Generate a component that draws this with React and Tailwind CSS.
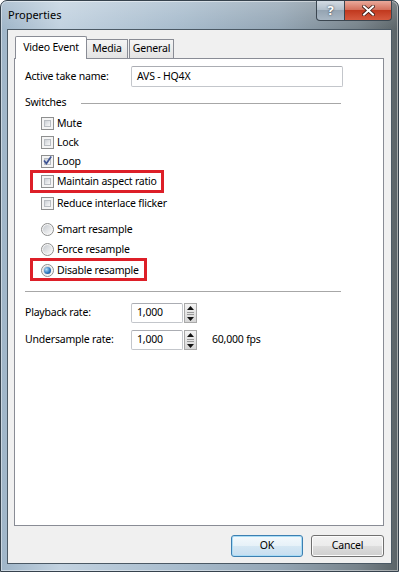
import React from "react";

const Check = ({ checked }) => (
    <span className="flex h-[13px] w-[13px] shrink-0 border border-[#8e8f8f] bg-[#f4f4f4] p-[2px]">
        <span className="relative flex-1 border border-[#b9bdc2] bg-gradient-to-br from-[#cdd1d6] to-[#f8f8f8]">
            {checked && (
                <svg className="absolute left-[-3px] top-[-4px]" width="11" height="11" viewBox="0 0 11 11">
                    <path d="M2 5.5 L4.4 8.6 L9.2 1.6" fill="none" stroke="#3e5494" strokeWidth="1.7" />
                </svg>
            )}
        </span>
    </span>
);

const Radio = ({ checked }) => (
    <span className="flex h-[13px] w-[13px] shrink-0 items-center justify-center rounded-full border border-[#8e8f8f] bg-[#f6f6f6]">
        <span className="flex h-[9px] w-[9px] items-center justify-center rounded-full bg-gradient-to-br from-[#c6cacf] to-[#fafafa]">
            {checked && (
                <span className="h-[7px] w-[7px] rounded-full bg-[radial-gradient(circle_at_35%_35%,#b4e0fb,#2f78bd_55%,#143f7a)]" />
            )}
        </span>
    </span>
);

const Spin = () => (
    <div className="ml-[1px] flex h-[20px] w-[13px] flex-col border border-[#a9a9a9] bg-gradient-to-b from-[#f3f3f3] to-[#d6d6d6]">
        <div className="flex h-[7px] items-center justify-center">
            <svg width="7" height="4" viewBox="0 0 7 4"><path d="M0 4 L3.5 0 L7 4Z" fill="#111" /></svg>
        </div>
        <div className="flex flex-1 flex-col justify-center gap-[1px] px-[2px]">
            <span className="h-[1px] bg-[#9a9a9a]" />
            <span className="h-[1px] bg-[#9a9a9a]" />
        </div>
        <div className="flex h-[7px] items-center justify-center">
            <svg width="7" height="4" viewBox="0 0 7 4"><path d="M0 0 L3.5 4 L7 0Z" fill="#111" /></svg>
        </div>
    </div>
);

const Row = ({ children, mark, markTop, markW, mt }) => (
    <div className={`relative flex h-[19px] items-center gap-[3px] ${mt}`}>
        {mark && (
            <span
                className="pointer-events-none absolute left-[-11px] h-[23px] border-[3px] border-[#dd1f28]"
                style={{ top: markTop, width: markW }}
            />
        )}
        {children}
    </div>
);

export default function App() {
    return (
        <div className="h-[572px] w-[399px] overflow-hidden bg-white font-['Noto_Sans',sans-serif] text-[10.5px] tracking-[-0.2px] text-black">
            <div className="flex h-[572px] w-[399px] flex-col overflow-hidden rounded-t-[7px] border border-[#36424d] bg-[linear-gradient(90deg,#9fb5c8,#c2d2e0_15%,#a8bccd_45%,#94a6b5_70%,#77838b_90%,#5b6468)] shadow-[inset_0_0_0_1px_rgba(255,255,255,0.45)]">
                {/* title bar */}
                <div className="flex h-[28px] shrink-0 bg-gradient-to-b from-white/20 to-transparent pl-[7px]">
                    <span className="mt-[6px] text-[11px] leading-[16px] tracking-normal">Properties</span>
                    <div className="ml-auto mr-[6px] flex h-[20px]">
                        <div className="flex w-[29px] items-center justify-center rounded-bl-[4px] border border-t-0 border-[#3b4650] bg-[linear-gradient(#d3dbe3,#b3c0cc_45%,#95a4b2_50%,#a9b7c4)] text-[13px] font-bold text-white [text-shadow:0_0_2px_#1d2834]">
                            ?
                        </div>
                        <div className="flex w-[47px] items-center justify-center rounded-br-[4px] border border-l-0 border-t-0 border-[#3b4650] bg-[linear-gradient(#e9a99b,#d4725e_45%,#c1391f_50%,#d65a3f)]">
                            <svg width="13" height="11" viewBox="0 0 13 11">
                                <path d="M2 1.5 L11 9.5 M11 1.5 L2 9.5" stroke="#3a1a14" strokeWidth="3.6" strokeLinecap="square" />
                                <path d="M2 1.5 L11 9.5 M11 1.5 L2 9.5" stroke="#ffffff" strokeWidth="2" strokeLinecap="square" />
                            </svg>
                        </div>
                    </div>
                </div>

                {/* client area */}
                <div className="mx-[6px] flex h-[535px] flex-col border border-[#4b5965] bg-[#f0f0f0]">
                    {/* tabs */}
                    <div className="ml-[7px] mt-[6px] flex h-[22px] items-end">
                        <div className="relative z-10 mb-[-1px] flex h-[23px] w-[72px] justify-center rounded-t-[2px] border border-b-0 border-[#898c95] bg-white pt-[3px] leading-[15px]">
                            Video Event
                        </div>
                        <div className="ml-[-1px] flex h-[19px] w-[42px] items-center justify-center border border-b-0 border-[#898c95] bg-gradient-to-b from-[#f5f5f5] to-[#e3e3e3]">
                            Media
                        </div>
                        <div className="ml-[1px] flex h-[19px] w-[45px] items-center justify-center border border-b-0 border-[#898c95] bg-gradient-to-b from-[#f5f5f5] to-[#e3e3e3]">
                            General
                        </div>
                    </div>

                    {/* panel */}
                    <div className="ml-[6px] h-[468px] w-[370px] border border-[#898c95] bg-white pl-[10px]">
                        <div className="mt-[7px] flex h-[21px] items-center">
                            <span className="w-[106px]">Active take name:</span>
                            <div className="flex h-[21px] w-[212px] items-center rounded-[2px] border border-[#c3c6cb] border-t-[#abadb3] pl-[5px]">
                                AVS - HQ4X
                            </div>
                        </div>

                        <div className="mt-[9px] flex h-[14px] w-[316px] items-center">
                            <span className="w-[56px]">Switches</span>
                            <span className="h-[1px] flex-1 bg-[#a7a7a7]" />
                        </div>

                        <div className="pl-[16px]">
                            <Row mt="mt-[4px]"><Check /><span>Mute</span></Row>
                            <Row mt=""><Check /><span>Lock</span></Row>
                            <Row mt=""><Check checked /><span>Loop</span></Row>
                            <Row mt="mt-[1px]" mark markTop={-2} markW={134}><Check /><span>Maintain aspect ratio</span></Row>
                            <Row mt="mt-[3px]"><Check /><span>Reduce interlace flicker</span></Row>
                            <Row mt="mt-[7px]"><Radio /><span>Smart resample</span></Row>
                            <Row mt="mt-[1px]"><Radio /><span>Force resample</span></Row>
                            <Row mt="mt-[2px]" mark markTop={-3} markW={117}><Radio checked /><span>Disable resample</span></Row>
                        </div>

                        <div className="mt-[11px] h-[1px] w-[316px] bg-[#a7a7a7]" />

                        <div className="mt-[11px] flex h-[20px] items-center">
                            <span className="w-[106px]">Playback rate:</span>
                            <div className="flex h-[20px] w-[52px] items-center rounded-[2px] border border-[#c3c6cb] border-t-[#abadb3] pl-[5px]">1,000</div>
                            <Spin />
                        </div>
                        <div className="mt-[7px] flex h-[20px] items-center">
                            <span className="w-[106px]">Undersample rate:</span>
                            <div className="flex h-[20px] w-[52px] items-center rounded-[2px] border border-[#c3c6cb] border-t-[#abadb3] pl-[5px]">1,000</div>
                            <Spin />
                            <span className="ml-[15px]">60,000 fps</span>
                        </div>
                    </div>

                    {/* buttons */}
                    <div className="mr-[7px] mt-[9px] flex justify-end gap-[8px]">
                        <button className="flex h-[22px] w-[72px] items-center justify-center rounded-[3px] border border-[#3c7fb1] bg-[linear-gradient(#f4f9fc,#e6f1f8_50%,#d5e7f3_50%,#c6def0)] shadow-[inset_0_0_0_1px_#a9dcf6]">
                            OK
                        </button>
                        <button className="flex h-[22px] w-[73px] items-center justify-center rounded-[3px] border border-[#707070] bg-[linear-gradient(#f2f2f2,#ebebeb_50%,#dddddd_50%,#cfcfcf)] shadow-[inset_0_0_0_1px_#fcfcfc]">
                            Cancel
                        </button>
                    </div>
                </div>
            </div>
        </div>
    );
}
